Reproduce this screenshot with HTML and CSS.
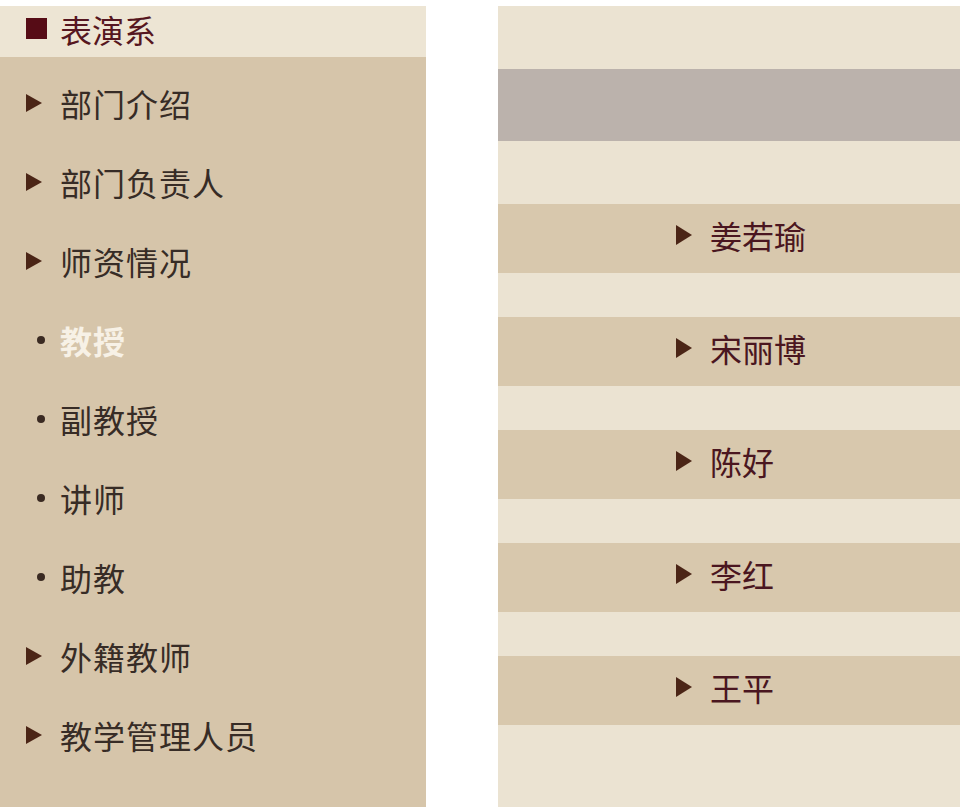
FILE: index.html
```html
<!DOCTYPE html>
<html lang="zh-CN">
  <head>
    <meta charset="UTF-8" />
    <meta name="viewport" content="width=device-width, initial-scale=1.0" />
    <title>表演系 | 师资情况</title>
    <link rel="stylesheet" href="styles.css">
  </head>
  <body>
    <div class="page">
      <!-- Left menu -->
      <div class="sidebar">
        <div class="sidebar-title">
          <span class="square"></span>
          <span>表演系</span>
        </div>
        <ul class="menu">
          <li class="menu-item"><span class="arrow"></span>部门介绍</li>
          <li class="menu-item"><span class="arrow"></span>部门负责人</li>
          <li class="menu-item"><span class="arrow"></span>师资情况</li>
          <li class="menu-item sub active"><span class="dot"></span>教授</li>
          <li class="menu-item sub"><span class="dot"></span>副教授</li>
          <li class="menu-item sub"><span class="dot"></span>讲师</li>
          <li class="menu-item sub"><span class="dot"></span>助教</li>
          <li class="menu-item"><span class="arrow"></span>外籍教师</li>
          <li class="menu-item"><span class="arrow"></span>教学管理人员</li>
        </ul>
      </div>

      <!-- Right list -->
      <div class="content">
        <div class="content-top"></div>
        <div class="content-bar"></div>
        <ul class="names">
          <li class="name-row"><span class="arrow"></span>姜若瑜</li>
          <li class="name-row"><span class="arrow"></span>宋丽博</li>
          <li class="name-row"><span class="arrow"></span>陈好</li>
          <li class="name-row"><span class="arrow"></span>李红</li>
          <li class="name-row"><span class="arrow"></span>王平</li>
        </ul>
      </div>
    </div>
  </body>
</html>
```

FILE: styles.css
```css
body {
  margin: 0;
  padding: 0;
  background-color: #ffffff;
  font-family: "Noto Sans CJK SC", "Noto Sans", sans-serif;
}

ul {
  list-style: none;
  margin: 0;
  padding: 0;
}

.page {
  display: flex;
  gap: 72px;
  padding-top: 6px;
  height: 801px;
}

/* Sidebar */
.sidebar {
  width: 426px;
  background-color: #d6c5aa;
  display: flex;
  flex-direction: column;
}

.sidebar-title {
  height: 51px;
  box-sizing: border-box;
  padding-bottom: 6px;
  background-color: #ede5d4;
  display: flex;
  align-items: center;
  padding-left: 26px;
  gap: 13px;
  font-size: 32px;
  color: #561620;
}

.square {
  width: 21px;
  height: 21px;
  background-color: #560c16;
}

.menu {
  padding-top: 10px;
}

.menu-item {
  height: 79px;
  box-sizing: border-box;
  padding-bottom: 7px;
  display: flex;
  align-items: center;
  padding-left: 26px;
  font-size: 32px;
  color: #372c26;
  letter-spacing: 1px;
}

.menu-item .arrow {
  margin-right: 18px;
}

.arrow {
  width: 0;
  height: 0;
  border-top: 9px solid transparent;
  border-bottom: 9px solid transparent;
  border-left: 16px solid #4b2516;
}

.dot {
  width: 8px;
  height: 8px;
  border-radius: 50%;
  background-color: #3a2a22;
  margin-left: 11px;
  margin-right: 15px;
}

.menu-item.active {
  color: #f7f1e6;
  font-weight: 700;
}

/* Content */
.content {
  flex: 1;
  background-color: #ebe3d2;
  display: flex;
  flex-direction: column;
}

.content-top {
  height: 63px;
}

.content-bar {
  height: 72px;
  background-color: #bbb2ac;
}

.names {
  padding-top: 63px;
  display: flex;
  flex-direction: column;
  gap: 44px;
}

.name-row {
  height: 69px;
  box-sizing: border-box;
  padding-bottom: 7px;
  background-color: #d8c8ad;
  display: flex;
  align-items: center;
  padding-left: 178px;
  font-size: 32px;
  color: #4a1620;
}

.name-row .arrow {
  border-top-width: 10px;
  border-bottom-width: 10px;
  border-left-width: 16px;
  margin-right: 18px;
}
```
